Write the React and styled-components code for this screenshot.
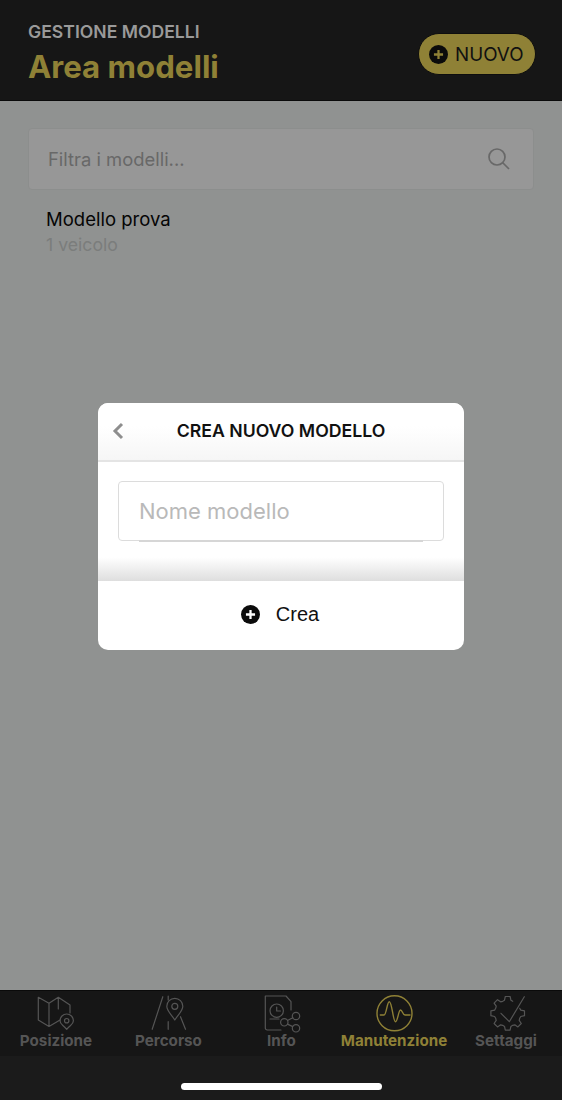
import React from "react";
import styled, { createGlobalStyle } from "styled-components";

const Global = createGlobalStyle`
  html, body { margin: 0; padding: 0; background: #8f9190; }
  * { box-sizing: border-box; }
`;
const FONT = `"Inter", "Liberation Sans", sans-serif`;
const Page = styled.div`
  width: 562px; height: 1100px; display: flex; flex-direction: column;
  background: #909291; font-family: ${FONT}; position: relative; overflow: hidden;
`;
const Header = styled.header`
  height: 101px; background: #161616; border-bottom: 1px solid #0a0a0a;
  padding: 23px 26px 0 28px; display: flex; justify-content: space-between; align-items: flex-start;
`;
const Titles = styled.div`display: flex; flex-direction: column;`;
const Over = styled.div`font-size: 17.6px; line-height: 18px; font-weight: 600; color: #9a9a9a;`;
const Title = styled.div`font-size: 31.2px; line-height: 38px; margin-top: 7px; font-weight: 700; color: #8f8136;`;
const NewBtn = styled.div`
  margin-top: 10px; height: 42px; width: 118px; border-radius: 21px; background: #8f8136;
  border: 1px solid #0e0e0e; display: flex; align-items: center; padding-left: 10px; gap: 7px;
  font-size: 18.8px; color: #111;
`;
const Content = styled.main`flex: 1; padding: 27px 28px 0;`;
const Search = styled.div`
  height: 62px; border: 1px solid #8c8e8d; border-radius: 4px; background: #979797;
  display: flex; align-items: center; justify-content: space-between; padding: 0 23px 0 19px;
  font-size: 18.4px; color: #686868;
`;
const Row = styled.div`padding: 19px 0 0 18px;`;
const RowName = styled.div`font-size: 18.5px; line-height: 21px; color: #050505;`;
const RowSub = styled.div`font-size: 17.700px; line-height: 20px; margin-top: 5px; color: #7b7d7c;`;
const Tabs = styled.nav`
  height: 66px; background: #161616; border-top: 1px solid #0a0a0a;
  display: grid; grid-template-columns: 112px 113px 113px 112px 112px;
`;
const Tab = styled.div`
  display: flex; flex-direction: column; align-items: center; padding-top: 5px;
  color: ${p => (p.$active ? "#8f8136" : "#555555")};
`;
const TabIcon = styled.svg`
  width: 40px; height: 36px; display: block; fill: none; stroke: currentColor;
  stroke-width: ${p => p.$weight || 1.2}; stroke-linejoin: round; stroke-linecap: round; overflow: visible;
`;
const TabLabel = styled.div`font-size: 15.2px; line-height: 18px; font-weight: 700; white-space: nowrap;`;
const HomeBar = styled.div`
  height: 44px; background: #1b1b1b; display: flex; justify-content: center; padding-top: 27px;
`;
const Indicator = styled.div`width: 201px; height: 7px; border-radius: 4px; background: #fff;`;
const Overlay = styled.div`
  position: absolute; inset: 0; display: flex; justify-content: center; align-items: flex-start; padding-top: 403px;
`;
const Modal = styled.div`
  width: 366px; height: 247px; border-radius: 10px; background: #fff; overflow: hidden; display: flex; flex-direction: column;
`;
const ModalHead = styled.div`
  height: 59px; display: flex; align-items: center; justify-content: center; position: relative;
  border-bottom: 2px solid #e4e4e4; background: linear-gradient(#fff 40%, #f6f6f6);
  font-size: 17.7px; font-weight: 600; color: #111; padding-bottom: 2px;
`;
const Back = styled.svg`position: absolute; left: 13px; top: 19px; width: 14px; height: 18px; fill: none; stroke: #8e8e8e; stroke-width: 3;`;
const ModalBody = styled.div`
  height: 119px; padding: 19px 20px 0; background: linear-gradient(#fff 80%, #dedede);
`;
const Input = styled.div`
  height: 60px; border: 1.5px solid #dcdcdc; border-radius: 4px; padding-left: 20px; position: relative;
  display: flex; align-items: center; font-size: 22px; color: #b9b9b9;
  &::after {
    content: ""; position: absolute; left: 20px; right: 20px; bottom: -1.5px; height: 1.5px; background: #d6d6d6;
  }
`;
const Action = styled.div`
  flex: 1; display: flex; align-items: center; justify-content: center; gap: 16px;
  font-family: "Liberation Sans", sans-serif; font-size: 20px; color: #111; padding: 0 2px 2px 0;
`;
const Plus = ({ size, bg, fg }) => (
  <svg width={size} height={size} viewBox="0 0 20 20">
    <circle cx="10" cy="10" r="10" fill={bg} />
    <path d="M10 5.2v9.6M5.2 10h9.6" stroke={fg} strokeWidth="2.4" />
  </svg>
);
const pin = (x, top, bottom, r) =>
  `M${x} ${bottom}C${x - r * 0.5} ${bottom - (bottom - top) * 0.3} ${x - r} ${top + r * 1.6} ${x - r} ${top + r}a${r} ${r} 0 0 1 ${2 * r} 0C${x + r} ${top + r * 1.6} ${x + r * 0.5} ${bottom - (bottom - top) * 0.3} ${x} ${bottom}z`;
const MapIcon = () => (
  <TabIcon viewBox="0 0 40 36">
    <path d="M13 7.300 2.300 1.300V24L13 30.500 24 24M13 7.300 22.300 1.300 34 9v8M13 7.300V30.500M22.300 1.300V13" />
    <path d={pin(30.7, 18, 33.300, 6.700)} />
    <circle cx="30.700" cy="24.700" r="2.200" />
  </TabIcon>
);
const RouteIcon = () => (
  <TabIcon viewBox="0 0 40 36">
    <path d="M3.200 33.300 13.800.7M19.200 0v4M19.200 25.700v7.600M36.500 33.300 31.500 20.700" />
    <path d={pin(25.800, 2.300, 24, 8)} />
    <circle cx="25.800" cy="10.300" r="3" />
  </TabIcon>
);
const InfoIcon = () => (
  <TabIcon viewBox="0 0 40 36">
    <path d="M19 34H5.300a2 2 0 0 1-2-2V0H24l5 5.700V14" />
    <circle cx="14.700" cy="14.700" r="6.700" />
    <path d="M14.700 11v4h3.800M8 23h9" />
    <circle cx="22.300" cy="26.300" r="3.700" /><circle cx="34" cy="20" r="3.700" /><circle cx="34" cy="32.300" r="3.700" />
    <path d="M25.500 24.500 30.800 21.700M25.500 28.100 30.800 30.600" />
  </TabIcon>
);
const PulseIcon = () => (
  <TabIcon viewBox="0 0 40 36" $weight={1.4}>
    <circle cx="20.500" cy="17.300" r="17.500" />
    <path d="M6.300 19H10C12.500 19 13 5.700 15.300 5.700 18 5.700 19 25.700 21.500 25.700 23.700 25.700 24.500 14 26.500 14 28.500 14 28.500 19 31 19H36" />
  </TabIcon>
);
const gearPath = () => {
  const cx = 21.7, cy = 17.3, n = 8, w = 2 * Math.PI / n;
  const tooth = [[-0.5, 13], [-0.3, 13.5], [-0.18, 17], [0.18, 17], [0.3, 13.5], [0.5, 13]];
  const points = [];
  // clockwise from the right-hand tooth round to the top one; the upper-right tooth is left open for the tick
  for (let i = 2; i <= 8; i++) {
    const a = -Math.PI / 2 + i * w;
    tooth.forEach(([t, r]) => {
      const ang = a + t * w;
      points.push(`${(cx + r * Math.cos(ang)).toFixed(1)} ${(cy + r * Math.sin(ang)).toFixed(1)}`);
    });
  }
  return "M" + points.join("L");
};
const GearIcon = () => (
  <TabIcon viewBox="0 0 40 36">
    <path d={gearPath()} />
    <path d="M15 17.300 23.300 25.700 38.300.7" />
  </TabIcon>
);
const tabs = [
  ["Posizione", MapIcon], ["Percorso", RouteIcon], ["Info", InfoIcon],
  ["Manutenzione", PulseIcon, true], ["Settaggi", GearIcon],
];
export default function App() {
  return (
    <Page>
      <Global />
      <Header>
        <Titles>
          <Over>GESTIONE MODELLI</Over>
          <Title>Area modelli</Title>
        </Titles>
        <NewBtn><Plus size={19} bg="#0b0b0b" fg="#8f8136" />NUOVO</NewBtn>
      </Header>
      <Content>
        <Search>
          Filtra i modelli...
          <svg width="22" height="22" viewBox="0 0 22 22" fill="none" stroke="#686868" strokeWidth="1.700">
            <circle cx="9" cy="9" r="8" /><path d="M14.500 14.500 21 21" />
          </svg>
        </Search>
        <Row>
          <RowName>Modello prova</RowName>
          <RowSub>1 veicolo</RowSub>
        </Row>
      </Content>
      <Tabs>
        {tabs.map(([label, Icon, active]) => (
          <Tab key={label} $active={active}><Icon /><TabLabel>{label}</TabLabel></Tab>
        ))}
      </Tabs>
      <HomeBar><Indicator /></HomeBar>
      <Overlay>
        <Modal>
          <ModalHead>
            <Back viewBox="0 0 14 18"><path d="M11 2 4 9l7 7" /></Back>
            CREA NUOVO MODELLO
          </ModalHead>
          <ModalBody><Input>Nome modello</Input></ModalBody>
          <Action><Plus size={19} bg="#0b0b0b" fg="#fff" />Crea</Action>
        </Modal>
      </Overlay>
    </Page>
  );
}
